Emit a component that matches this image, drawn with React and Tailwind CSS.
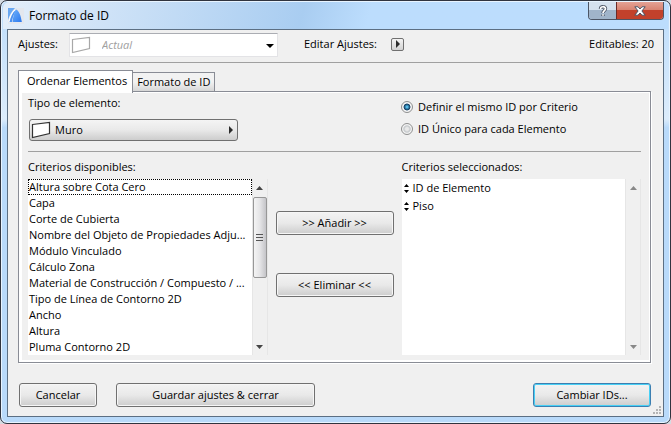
import React, { useState } from "react";

const AVAILABLE = [
  "Altura sobre Cota Cero",
  "Capa",
  "Corte de Cubierta",
  "Nombre del Objeto de Propiedades Adju...",
  "Módulo Vinculado",
  "Cálculo Zona",
  "Material de Construcción / Compuesto / ...",
  "Tipo de Línea de Contorno 2D",
  "Ancho",
  "Altura",
  "Pluma Contorno 2D",
];

const SELECTED = ["ID de Elemento", "Piso"];

function WallIcon({ className }) {
  return (
    <svg viewBox="0 0 20 18" className={`h-[18px] w-5 ${className}`} aria-hidden="true">
      <path d="M1.5 3.5 L18.5 1.5 V12.5 L1.5 16.5 Z" fill="#fff" stroke="currentColor" strokeWidth="1.2" />
    </svg>
  );
}

function AppIcon() {
  return (
    <svg viewBox="0 0 16 16" className="h-4 w-4" aria-hidden="true">
      <defs>
        <linearGradient id="sail" x1="0" y1="0" x2="1" y2="1">
          <stop offset="0" stopColor="#6db0fa" />
          <stop offset="1" stopColor="#2a78ee" />
        </linearGradient>
      </defs>
      <rect width="16" height="16" fill="#e3e7ee" />
      <path d="M0 0 H7 C4 3 1.5 7 0 12 Z" fill="#69a8f2" />
      <path d="M0.5 14 C1.5 8 4 3.5 7 1.5 L7.5 2.5 C4.5 5 2.5 9 1.5 14 Z" fill="#fff" />
      <path d="M1.5 14 C2.5 9 4.5 4.5 7.5 2.2 L8 3 C5.5 6 4.4 10 4 14 Z" fill="#4a92f2" />
      <path d="M4.6 14 C5 9 6 4.5 8 1.5 C11 2.2 12.8 8 13.8 14 Z" fill="url(#sail)" />
    </svg>
  );
}

function ArrowRight() {
  return (
    <svg viewBox="0 0 4 8" className="h-2 w-1" aria-hidden="true">
      <path d="M0 0 L4 4 L0 8 Z" fill="#2b2b2b" />
    </svg>
  );
}

function SortHandle() {
  return (
    <svg viewBox="0 0 5 9" className="h-[9px] w-[5px]" aria-hidden="true">
      <path d="M0 3 L2.5 0 L5 3 Z M0 6 L2.5 9 L5 6 Z" fill="#000" />
    </svg>
  );
}

function PushButton({ primary, className = "", children }) {
  return (
    <button
      type="button"
      className={`h-6 rounded-[3px] border bg-linear-to-b from-[#f3f3f3] from-0% via-[#e9e9e9] via-50% to-[#cdcdcd] to-100% text-center ${
        primary
          ? "border-[#3c7fb1] shadow-[inset_0_0_0_1px_#48d0f5]"
          : "border-[#707070] shadow-[inset_0_0_0_1px_#f6f6f6]"
      } ${className}`}
    >
      {children}
    </button>
  );
}

function ScrollBar({ thumb }) {
  return (
    <div className="flex w-4 flex-col items-center border-x border-[#e6e6e6] bg-[#f0f0f0]" aria-hidden="true">
      <div className="flex h-[18px] items-center">
        <svg viewBox="0 0 7 4" className="h-1 w-[7px]">
          <path d="M0 4 L3.5 0 L7 4 Z" fill={thumb ? "#444" : "#888"} />
        </svg>
      </div>
      <div className="flex w-full flex-1 flex-col">
        {thumb && (
          <div className="flex h-[81px] flex-col items-center justify-center gap-0.5 rounded-xs border border-[#979797] bg-linear-to-r from-[#f4f4f4] via-[#e4e4e6] to-[#c4c4c8]">
            <span className="h-px w-[7px] bg-[#555]" />
            <span className="h-px w-[7px] bg-[#555]" />
            <span className="h-px w-[7px] bg-[#555]" />
          </div>
        )}
      </div>
      <div className="flex h-4 items-center">
        <svg viewBox="0 0 7 4" className="h-1 w-[7px]">
          <path d="M0 0 L3.5 4 L7 0 Z" fill={thumb ? "#444" : "#888"} />
        </svg>
      </div>
    </div>
  );
}

function Radio({ checked, onChange, children }) {
  return (
    <label className="flex h-[22px] items-center gap-[5px]">
      <input
        type="radio"
        name="mode"
        checked={checked}
        onChange={onChange}
        className="h-3 w-3 appearance-none rounded-full border border-[#8e8f8f] bg-radial from-[#e9e9e9] from-20% via-[#c3c7ca] via-45% to-[#f4f4f4] to-60% checked:from-[#5fd0ff] checked:from-5% checked:via-[#123f63] checked:via-42% checked:to-[#f4f4f4] checked:to-54%"
      />
      {children}
    </label>
  );
}

export default function App() {
  const [tab, setTab] = useState("ordenar");
  const [mode, setMode] = useState("criterio");
  const [current, setCurrent] = useState(0);

  const tabClass = (active) =>
    active
      ? "relative z-10 -mb-0.5 h-[23px] border border-b-0 border-[#898c95] bg-white pr-[5px] pb-0.5 pl-2"
      : "h-[19px] border border-b-0 border-l-0 border-[#898c95] bg-linear-to-b from-[#f2f2f2] from-50% to-[#d6d6d6] px-1";

  return (
    <div className="bg-[#d5dbe2] font-['Open_Sans','Noto_Sans',sans-serif] text-[11px] leading-4 text-black">
      <div className="rounded-[7px] border border-[#30343f] bg-linear-to-b from-[#bcdcfb] from-0% via-[#dcecfb] via-28% to-[#b9dafa] to-30% px-1.5 pb-1.5 shadow-[inset_0_0_0_1px_#e8f4ff]">
        <header className="-mx-1 mt-px flex h-[27px] justify-between rounded-t-md bg-linear-105 from-[#e3eefa] from-0% via-[#a9cdf1] via-45% to-[#bcddfd] to-55% pr-1 pl-[5px]">
          <div className="flex items-center gap-[5px] text-xs">
            <AppIcon />
            <h1>Formato de ID</h1>
          </div>
          <div className="flex h-[18px] overflow-hidden rounded-b-[4px] border border-t-0 border-[#4c5565]">
            <button
              type="button"
              aria-label="Ayuda"
              className="flex w-[27px] items-center justify-center bg-linear-to-b from-[#d5e1ee] from-45% to-[#a0b4ca] to-50%"
            >
              <svg viewBox="0 0 10 12" className="h-3 w-2.5" fill="none">
                <path d="M2.5 4 C2.5 1 7.5 1 7.5 3.8 C7.5 5.6 5 5.6 5 8 M5 9.5 V11" stroke="#4c5565" strokeWidth="3.4" />
                <path d="M2.5 4 C2.5 1 7.5 1 7.5 3.8 C7.5 5.6 5 5.6 5 8 M5 9.3 V10.7" stroke="#fff" strokeWidth="1.7" />
              </svg>
            </button>
            <button
              type="button"
              aria-label="Cerrar"
              className="flex w-[47px] items-center justify-center border-l border-[#6b2a26] bg-linear-to-b from-[#e4a295] from-0% via-[#d98472] via-45% to-[#c2412b] to-50%"
            >
              <svg viewBox="0 0 12 10" className="h-2.5 w-3">
                <path
                  d="M0.8 0.8 H4 L6 3 L8 0.8 H11.2 L7.9 5 L11.2 9.2 H8 L6 7 L4 9.2 H0.8 L4.1 5 Z"
                  fill="#fff"
                  stroke="#4c5565"
                />
              </svg>
            </button>
          </div>
        </header>

        <main className="border border-[#5c6f83] bg-[#f0f0f0] pb-[9px]">
          <div className="mx-px flex h-[33px] items-center border-b border-[#a0a0a0] pr-2 pb-1 pl-[9px]">
            <label htmlFor="ajustes" className="w-[51px]">Ajustes:</label>
            <div className="relative mt-0.5 w-[209px]">
              <select
                id="ajustes"
                disabled
                className="h-6 w-full appearance-none border border-[#e3e3e6] border-t-[#abadb3] bg-white pl-8 text-[#a0a0a0] italic opacity-100"
              >
                <option>Actual</option>
              </select>
              <WallIcon className="pointer-events-none absolute top-[3px] left-0.5 text-[#a8a8a8]" />
              <svg viewBox="0 0 8 4" className="pointer-events-none absolute top-[11px] right-1 h-1 w-2">
                <path d="M0 0 H8 L4 4 Z" fill="#000" />
              </svg>
            </div>
            <span className="ml-[26px] w-[87px]">Editar Ajustes:</span>
            <button
              type="button"
              aria-label="Editar Ajustes"
              className="flex h-[13px] w-[13px] items-center justify-center rounded-xs border border-[#707070] bg-linear-to-b from-[#f4f4f4] to-[#d2d2d2]"
            >
              <ArrowRight />
            </button>
            <span className="ml-auto">Editables: 20</span>
          </div>

          <div className="mt-[7px] mr-3 ml-2.5">
            <div role="tablist" className="flex items-end">
              <button
                type="button"
                role="tab"
                aria-selected={tab === "ordenar"}
                onClick={() => setTab("ordenar")}
                className={tabClass(tab === "ordenar")}
              >
                Ordenar Elementos
              </button>
              <button
                type="button"
                role="tab"
                aria-selected={tab === "formato"}
                onClick={() => setTab("formato")}
                className={tabClass(tab === "formato")}
              >
                Formato de ID
              </button>
            </div>

            <section className="border border-[#898c95] bg-white pt-px pr-px pb-0.5 pl-[3px] shadow-[1px_1px_0_#fff]">
              <div className="bg-[#f0f0f0] pr-2 pb-[5px] pl-1.5">
                <div className="flex border-b border-[#a0a0a0] pb-2.5">
                  <div className="w-[373px] pt-0.5">
                    <p id="tipo">Tipo de elemento:</p>
                    <button
                      type="button"
                      aria-labelledby="tipo"
                      className="mt-2 ml-px flex h-[22px] w-[209px] items-center gap-1 rounded-[3px] border border-[#707070] bg-linear-to-b from-[#f4f4f4] from-0% via-[#e9e9e9] via-50% to-[#cdcdcd] to-100% pr-1 pl-px"
                    >
                      <WallIcon className="text-[#333]" />
                      <span className="flex-1 text-left">Muro</span>
                      <ArrowRight />
                    </button>
                  </div>
                  <div className="pt-[3px]">
                    <Radio checked={mode === "criterio"} onChange={() => setMode("criterio")}>
                      Definir el mismo ID por Criterio
                    </Radio>
                    <Radio checked={mode === "unico"} onChange={() => setMode("unico")}>
                      ID Único para cada Elemento
                    </Radio>
                  </div>
                </div>

                <div className="flex gap-2 pt-[7px]">
                  <div className="flex flex-1 flex-col gap-1">
                    <h2 id="disponibles">Criterios disponibles:</h2>
                    <div className="flex bg-white">
                      <ul role="listbox" aria-labelledby="disponibles" className="min-w-0 flex-1">
                        {AVAILABLE.map((name, i) => (
                          <li
                            key={name}
                            role="option"
                            aria-selected={i === current}
                            onClick={() => setCurrent(i)}
                            className={`flex h-4 items-center border border-dotted whitespace-nowrap ${
                              i === current ? "border-black" : "border-transparent"
                            }`}
                          >
                            {name}
                          </li>
                        ))}
                      </ul>
                      <ScrollBar thumb />
                    </div>
                  </div>

                  <div className="flex w-[118px] flex-col gap-[38px] pt-[52px]">
                    <PushButton>&gt;&gt; Añadir &gt;&gt;</PushButton>
                    <PushButton>&lt;&lt; Eliminar &lt;&lt;</PushButton>
                  </div>

                  <div className="flex flex-1 flex-col gap-1">
                    <h2 id="seleccionados">Criterios seleccionados:</h2>
                    <div className="flex flex-1 bg-white">
                      <ul role="listbox" aria-labelledby="seleccionados" className="flex-1 pl-0.5">
                        {SELECTED.map((name) => (
                          <li key={name} role="option" aria-selected={false} className="flex h-[18px] items-center gap-1">
                            <SortHandle />
                            {name}
                          </li>
                        ))}
                      </ul>
                      <ScrollBar />
                    </div>
                  </div>
                </div>
              </div>
            </section>
          </div>

          <footer className="relative mt-5 flex pr-3 pl-[11px]">
            <PushButton className="w-[78px]">Cancelar</PushButton>
            <PushButton className="ml-[19px] w-[199px]">Guardar ajustes &amp; cerrar</PushButton>
            <PushButton primary className="ml-auto w-[118px]">Cambiar IDs...</PushButton>
            <svg viewBox="0 0 8 8" className="absolute right-0.5 -bottom-[7px] h-2 w-2" fill="#b4b4b4" aria-hidden="true">
              <path d="M6 0h2v2h-2z M3 3h2v2h-2z M6 3h2v2h-2z M0 6h2v2h-2z M3 6h2v2h-2z M6 6h2v2h-2z" />
            </svg>
          </footer>
        </main>
      </div>
    </div>
  );
}
